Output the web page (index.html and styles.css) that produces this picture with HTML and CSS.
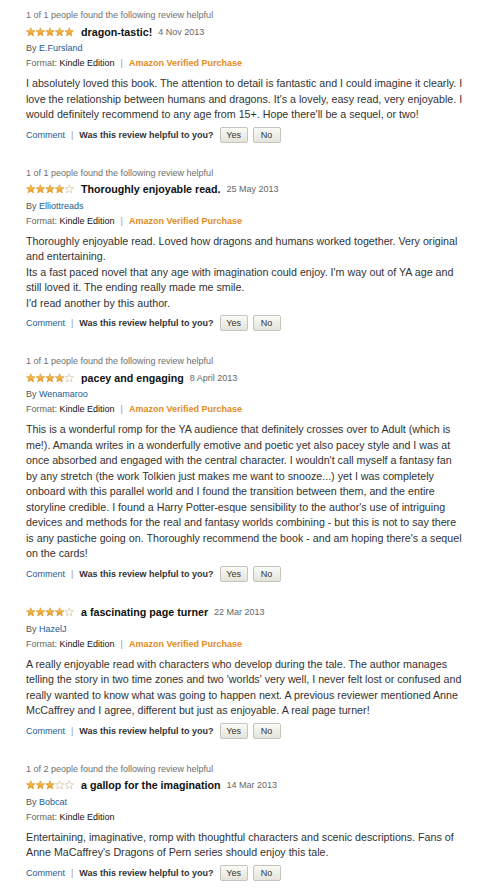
FILE: index.html
```html
<!DOCTYPE html>
<html>
<head>
<meta charset="utf-8">
<link rel="stylesheet" href="styles.css">
</head>
<body>
<svg class="defs" width="0" height="0">
  <defs>
    <linearGradient id="gold" x1="0" y1="0" x2="0" y2="1">
      <stop offset="0" stop-color="#fbd36a"/>
      <stop offset="1" stop-color="#e8920f"/>
    </linearGradient>
    <symbol id="sf" viewBox="0 0 10 10"><path d="M5 0.5L6.18 3.6L9.5 3.72L6.9 5.8L7.8 9.1L5 7.2L2.2 9.1L3.1 5.8L0.5 3.72L3.82 3.6Z" fill="url(#gold)" stroke="#d08a1c" stroke-width="0.6" stroke-linejoin="round"/></symbol>
    <symbol id="se" viewBox="0 0 10 10"><path d="M5 0.5L6.18 3.6L9.5 3.72L6.9 5.8L7.8 9.1L5 7.2L2.2 9.1L3.1 5.8L0.5 3.72L3.82 3.6Z" fill="#fff" stroke="#cfb68c" stroke-width="0.6" stroke-linejoin="round"/></symbol>
  </defs>
</svg>
<div class="reviews">

  <div class="review">
    <div class="helpful">1 of 1 people found the following review helpful</div>
    <div class="title-row">
      <svg class="stars" width="48" height="10" viewBox="0 0 50 10"><use href="#sf" x="0" width="10" height="10"/><use href="#sf" x="10" width="10" height="10"/><use href="#sf" x="20" width="10" height="10"/><use href="#sf" x="30" width="10" height="10"/><use href="#sf" x="40" width="10" height="10"/></svg>
      <span class="title">dragon-tastic!</span>
      <span class="date">4 Nov 2013</span>
    </div>
    <div class="by">By <a class="link" href="#">E.Fursland</a></div>
    <div class="format">Format: <span class="fmt">Kindle Edition</span><span class="sep">|</span><span class="verified">Amazon Verified Purchase</span></div>
    <p class="text">I absolutely loved this book. The attention to detail is fantastic and I could imagine it clearly. I<br>love the relationship between humans and dragons. It's a lovely, easy read, very enjoyable. I<br>would definitely recommend to any age from 15+. Hope there'll be a sequel, or two!</p>
    <div class="actions"><a class="link" href="#">Comment</a><span class="sep">|</span><span class="ask">Was this review helpful to you?</span><button class="btn">Yes</button><button class="btn">No</button></div>
  </div>

  <div class="review">
    <div class="helpful">1 of 1 people found the following review helpful</div>
    <div class="title-row">
      <svg class="stars" width="48" height="10" viewBox="0 0 50 10"><use href="#sf" x="0" width="10" height="10"/><use href="#sf" x="10" width="10" height="10"/><use href="#sf" x="20" width="10" height="10"/><use href="#sf" x="30" width="10" height="10"/><use href="#se" x="40" width="10" height="10"/></svg>
      <span class="title">Thoroughly enjoyable read.</span>
      <span class="date">25 May 2013</span>
    </div>
    <div class="by">By <a class="link" href="#">Elliottreads</a></div>
    <div class="format">Format: <span class="fmt">Kindle Edition</span><span class="sep">|</span><span class="verified">Amazon Verified Purchase</span></div>
    <p class="text">Thoroughly enjoyable read. Loved how dragons and humans worked together. Very original<br>and entertaining.<br>Its a fast paced novel that any age with imagination could enjoy. I'm way out of YA age and<br>still loved it. The ending really made me smile.<br>I'd read another by this author.</p>
    <div class="actions"><a class="link" href="#">Comment</a><span class="sep">|</span><span class="ask">Was this review helpful to you?</span><button class="btn">Yes</button><button class="btn">No</button></div>
  </div>

  <div class="review">
    <div class="helpful">1 of 1 people found the following review helpful</div>
    <div class="title-row">
      <svg class="stars" width="48" height="10" viewBox="0 0 50 10"><use href="#sf" x="0" width="10" height="10"/><use href="#sf" x="10" width="10" height="10"/><use href="#sf" x="20" width="10" height="10"/><use href="#sf" x="30" width="10" height="10"/><use href="#se" x="40" width="10" height="10"/></svg>
      <span class="title">pacey and engaging</span>
      <span class="date">8 April 2013</span>
    </div>
    <div class="by">By <a class="link" href="#">Wenamaroo</a></div>
    <div class="format">Format: <span class="fmt">Kindle Edition</span><span class="sep">|</span><span class="verified">Amazon Verified Purchase</span></div>
    <p class="text">This is a wonderful romp for the YA audience that definitely crosses over to Adult (which is<br>me!). Amanda writes in a wonderfully emotive and poetic yet also pacey style and I was at<br>once absorbed and engaged with the central character. I wouldn't call myself a fantasy fan<br>by any stretch (the work Tolkien just makes me want to snooze...) yet I was completely<br>onboard with this parallel world and I found the transition between them, and the entire<br>storyline credible. I found a Harry Potter-esque sensibility to the author's use of intriguing<br>devices and methods for the real and fantasy worlds combining - but this is not to say there<br>is any pastiche going on. Thoroughly recommend the book - and am hoping there's a sequel<br>on the cards!</p>
    <div class="actions"><a class="link" href="#">Comment</a><span class="sep">|</span><span class="ask">Was this review helpful to you?</span><button class="btn">Yes</button><button class="btn">No</button></div>
  </div>

  <div class="review">
    <div class="title-row">
      <svg class="stars" width="48" height="10" viewBox="0 0 50 10"><use href="#sf" x="0" width="10" height="10"/><use href="#sf" x="10" width="10" height="10"/><use href="#sf" x="20" width="10" height="10"/><use href="#sf" x="30" width="10" height="10"/><use href="#se" x="40" width="10" height="10"/></svg>
      <span class="title">a fascinating page turner</span>
      <span class="date">22 Mar 2013</span>
    </div>
    <div class="by">By <a class="link" href="#">HazelJ</a></div>
    <div class="format">Format: <span class="fmt">Kindle Edition</span><span class="sep">|</span><span class="verified">Amazon Verified Purchase</span></div>
    <p class="text">A really enjoyable read with characters who develop during the tale. The author manages<br>telling the story in two time zones and two 'worlds' very well, I never felt lost or confused and<br>really wanted to know what was going to happen next. A previous reviewer mentioned Anne<br>McCaffrey and I agree, different but just as enjoyable. A real page turner!</p>
    <div class="actions"><a class="link" href="#">Comment</a><span class="sep">|</span><span class="ask">Was this review helpful to you?</span><button class="btn">Yes</button><button class="btn">No</button></div>
  </div>

  <div class="review">
    <div class="helpful">1 of 2 people found the following review helpful</div>
    <div class="title-row">
      <svg class="stars" width="48" height="10" viewBox="0 0 50 10"><use href="#sf" x="0" width="10" height="10"/><use href="#sf" x="10" width="10" height="10"/><use href="#sf" x="20" width="10" height="10"/><use href="#se" x="30" width="10" height="10"/><use href="#se" x="40" width="10" height="10"/></svg>
      <span class="title">a gallop for the imagination</span>
      <span class="date">14 Mar 2013</span>
    </div>
    <div class="by">By <a class="link" href="#">Bobcat</a></div>
    <div class="format">Format: <span class="fmt">Kindle Edition</span></div>
    <p class="text">Entertaining, imaginative, romp with thoughtful characters and scenic descriptions. Fans of<br>Anne MaCaffrey's Dragons of Pern series should enjoy this tale.</p>
    <div class="actions"><a class="link" href="#">Comment</a><span class="sep">|</span><span class="ask">Was this review helpful to you?</span><button class="btn">Yes</button><button class="btn">No</button></div>
  </div>

</div>
</body>
</html>
```
FILE: styles.css
```css
html, body {
  margin: 0;
  padding: 0;
  background: #fff;
}
body {
  font-family: "Liberation Sans", Arial, sans-serif;
  color: #333;
}
.defs {
  position: absolute;
  width: 0;
  height: 0;
}
.reviews {
  padding: 7px 0 0 26px;
  width: 444px;
  display: flex;
  flex-direction: column;
  gap: 20px;
}
.review {
  display: flex;
  flex-direction: column;
}
.helpful {
  font-size: 9px;
  line-height: 16px;
  color: #6f6f6f;
}
.title-row {
  display: flex;
  align-items: center;
  height: 17px;
}
.stars {
  display: block;
  margin-right: 7px;
}
.title {
  font-size: 10.7px;
  font-weight: bold;
  color: #111;
  margin-right: 6px;
}
.date {
  font-size: 9px;
  color: #666;
}
.by {
  font-size: 9px;
  line-height: 16px;
  color: #555;
}
.link {
  color: #1d5a95;
  text-decoration: none;
}
.format {
  font-size: 9px;
  line-height: 15px;
  color: #666;
}
.fmt {
  color: #111;
}
.sep {
  color: #999;
  margin: 0 6px;
}
.verified {
  color: #e38a1e;
  font-weight: bold;
}
.text {
  margin: 5px 0 0;
  font-size: 10.7px;
  line-height: 15.5px;
  color: #333;
  white-space: nowrap;
}
.actions {
  margin-top: 2px;
  height: 20px;
  display: flex;
  align-items: center;
  font-size: 9px;
}
.ask {
  font-weight: bold;
  color: #333;
  margin-right: 6px;
}
.btn {
  font-family: "Liberation Sans", Arial, sans-serif;
  font-size: 9px;
  color: #333;
  width: 28px;
  height: 16px;
  padding: 0;
  margin-right: 5px;
  border: 1px solid #c4c4bc;
  border-radius: 2px;
  background: linear-gradient(#fafaf6, #e4e4dc);
}
```
